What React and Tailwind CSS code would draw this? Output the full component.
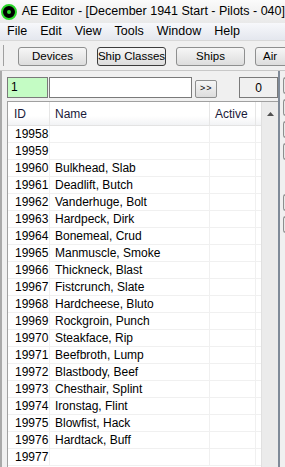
import React from 'react';

const rows = [
  ['19958', ''],
  ['19959', ''],
  ['19960', 'Bulkhead, Slab'],
  ['19961', 'Deadlift, Butch'],
  ['19962', 'Vanderhuge, Bolt'],
  ['19963', 'Hardpeck, Dirk'],
  ['19964', 'Bonemeal, Crud'],
  ['19965', 'Manmuscle, Smoke'],
  ['19966', 'Thickneck, Blast'],
  ['19967', 'Fistcrunch, Slate'],
  ['19968', 'Hardcheese, Bluto'],
  ['19969', 'Rockgroin, Punch'],
  ['19970', 'Steakface, Rip'],
  ['19971', 'Beefbroth, Lump'],
  ['19972', 'Blastbody, Beef'],
  ['19973', 'Chesthair, Splint'],
  ['19974', 'Ironstag, Flint'],
  ['19975', 'Blowfist, Hack'],
  ['19976', 'Hardtack, Buff'],
  ['19977', ''],
];

const menus = ['File', 'Edit', 'View', 'Tools', 'Window', 'Help'];
const tools = ['Devices', 'Ship Classes', 'Ships', 'Air'];

function ToolButton({ label, active, last }) {
  return (
    <div
      className={`w-[69px] h-[19px] shrink-0 rounded-[3px] border flex items-center whitespace-nowrap text-[11.5px] text-black bg-gradient-to-b from-[#f6f6f6] to-[#dddddd] ${
        active ? 'border-[#3c3c3c]' : 'border-[#8e8f8f]'
      } ${last ? 'justify-start pl-[7px]' : 'justify-center'}`}
    >
      {label}
    </div>
  );
}

export default function App() {
  return (
    <div
      className="w-[285px] h-[467px] overflow-hidden bg-[#f0f0f0] flex flex-col"
      style={{ fontFamily: '"Liberation Sans", Arial, sans-serif' }}
    >
      {/* title bar */}
      <div className="h-[23px] shrink-0 flex items-center gap-[5px] pl-[1px] bg-gradient-to-b from-[#fbfbfb] to-[#e9e9e9]">
        <div className="w-[16px] h-[16px] rounded-full bg-black border-2 border-[#2bd82b] flex items-center justify-center">
          <div className="w-[4px] h-[4px] rounded-full bg-[#2bd82b]" />
        </div>
        <span className="text-[12.5px] text-black whitespace-nowrap">AE Editor - [December 1941 Start - Pilots - 040]</span>
      </div>

      {/* menu bar */}
      <div className="h-[18px] shrink-0 flex items-center gap-[13px] pl-[7px] bg-gradient-to-b from-[#f7f8fb] to-[#e4e7ee] border-b border-[#d8d8d8]">
        {menus.map((m) => (
          <span key={m} className="text-[12.5px] text-black">{m}</span>
        ))}
      </div>

      {/* toolbar */}
      <div className="h-[30px] shrink-0 flex items-center border-b border-[#c8c8c8] pb-[2px]">
        <div className="w-[2px] h-[21px] ml-[3px] border-l border-[#a0a0a0] mt-[2px]" />
        <div className="flex gap-[10px] ml-[14px] mt-[4px]">
          {tools.map((t, i) => (
            <ToolButton key={t} label={t} active={i === 1} last={i === 3} />
          ))}
        </div>
      </div>

      <div className="flex flex-1 min-h-0">
        {/* left panel */}
        <div className="w-[278px] shrink-0 flex flex-col border-l-2 border-[#a9a9a9]">
          {/* filter row */}
          <div className="h-[30px] shrink-0 flex items-center pl-[5px] pt-[3px]">
            <div className="w-[41px] h-[21px] bg-[#c4fcc4] border border-[#7a7a7a] text-[12px] pl-[3px] leading-[19px]">1</div>
            <div className="w-[144px] h-[21px] ml-[1px] bg-white border border-[#7a7a7a]" />
            <div className="w-[22px] h-[18px] ml-[3px] mt-[3px] rounded-[2px] border border-[#8e8f8f] bg-gradient-to-b from-[#f6f6f6] to-[#dddddd] text-[9px] flex items-center justify-center tracking-[1px]">
              &gt;&gt;
            </div>
            <div className="w-[39px] h-[21px] ml-[22px] border border-[#7a7a7a] text-[12px] flex items-center justify-center">0</div>
          </div>

          {/* table */}
          <div className="flex-1 min-h-0 ml-[5px] border-l border-t border-[#a0a0a0] bg-white flex overflow-hidden">
            <div className="w-[253px] shrink-0 flex flex-col">
              <div className="h-[24px] shrink-0 flex text-[12px] text-[#1a1a3a] bg-gradient-to-b from-white from-60% to-[#f2f3f5] border-b border-[#e3e3e3]">
                <div className="w-[42px] pl-[6px] flex items-center border-r border-[#e6e6e6]">ID</div>
                <div className="w-[160px] pl-[5px] flex items-center border-r border-[#e6e6e6]">Name</div>
                <div className="w-[46px] pl-[5px] flex items-center border-r border-[#e6e6e6]">Active</div>
              </div>
              {rows.map(([id, name]) => (
                <div key={id} className="h-[17px] shrink-0 flex text-[12px] text-black border-b border-[#f0f0f0]">
                  <div className="w-[42px] pl-[7px] leading-[17px] border-r border-[#f0f0f0]">{id}</div>
                  <div className="w-[160px] pl-[5px] leading-[17px] border-r border-[#f0f0f0] whitespace-nowrap">{name}</div>
                  <div className="w-[46px] border-r border-[#f0f0f0]" />
                </div>
              ))}
            </div>
            {/* scrollbar */}
            <div className="w-[17px] shrink-0 bg-[#ebebeb] border-l border-[#e0e0e0] flex justify-center pt-[10px]">
              <svg width="7" height="4" viewBox="0 0 7 4">
                <path d="M0 4 L3.5 0 L7 4 Z" fill="#505050" />
              </svg>
            </div>
          </div>
        </div>

        {/* splitter */}
        <div className="w-[2px] shrink-0 bg-[#7f8a98]" />

        {/* right panel */}
        <div className="flex-1 flex flex-col pl-[3px] pt-[6px] gap-[5px]">
          {[0, 1, 2, 3].map((i) => (
            <div key={i} className="h-[17px] w-[10px] shrink-0 rounded-l-[3px] border border-r-0 border-[#8e8f8f] bg-[#e8e8e8]" />
          ))}
          <div className="h-[24px] shrink-0" />
          {[4, 5].map((i) => (
            <div key={i} className="h-[17px] w-[10px] shrink-0 rounded-l-[3px] border border-r-0 border-[#8e8f8f] bg-[#e8e8e8]" />
          ))}
        </div>
      </div>
    </div>
  );
}
